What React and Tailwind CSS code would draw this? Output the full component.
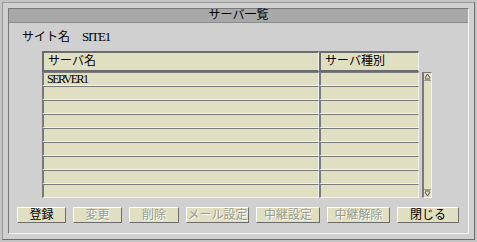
import React from 'react';

const rows = ['SERVER1', '', '', '', '', '', '', '', ''];

const buttons = [
  { label: '登録', w: 'w-[49px]', on: true },
  { label: '変更', w: 'w-[49px]', on: false },
  { label: '削除', w: 'w-[50px]', on: false },
  { label: 'メール設定', w: 'w-[63px]', on: false },
  { label: '中継設定', w: 'w-[64px]', on: false },
  { label: '中継解除', w: 'w-[63px]', on: false },
  { label: '閉じる', w: 'w-[62px]', on: true },
];

const Arrow = ({ down }) => (
  <svg width="7" height="7" viewBox="0 0 7 7" className={down ? 'rotate-180' : ''}>
    <path d="M3.5 1 L1 5 M3.5 1 L6 5 M1 6 L6 6" stroke="#505050" strokeWidth="1" fill="none" />
  </svg>
);

const App = () => {
  return (
    <div
      className="w-[477px] h-[242px] bg-[#c4c4c4] p-[2px] text-black"
      style={{ fontFamily: '"Liberation Serif", "Noto Sans CJK JP", serif' }}
    >
      {/* 外枠 */}
      <div className="h-[238px] border border-t-[#9a9a9a] border-l-[#9a9a9a] border-r-[#6c6c6c] border-b-[#6c6c6c] bg-[#d0d0d0] p-[5px] pb-[4px]">
        {/* パネル */}
        <div className="h-[226px] border border-t-[#7a7a7a] border-l-[#7a7a7a] border-r-[#f4f4f4] border-b-[#f4f4f4] bg-[#d0d0d0] flex flex-col">
          <div className="h-[14px] bg-[#a8a8a8] border-b border-[#8c8c8c] flex items-center justify-center text-[12px] leading-[13px]">
            サーバ一覧
          </div>

          <div className="mt-[7px] ml-[13px] h-[14px] text-[12px] leading-[14px] flex items-baseline gap-[12px]">
            <span>サイト名</span>
            <span className="text-[13px] tracking-[-1.2px]">SITE1</span>
          </div>

          {/* 一覧 */}
          <div className="mt-[7px] ml-[33px] flex items-end gap-[3px]">
            <div className="w-[377px] flex flex-col">
              <div className="grid grid-cols-[277px_100px] h-[21px]">
                <div className="bg-[#e0dfc1] border-t-2 border-l-2 border-[#6c6c6c] border-b-2 border-b-[#6c6c6c] border-r border-r-[#f2f2f2] pl-[4px] text-[12px] leading-[16px]">
                  サーバ名
                </div>
                <div className="bg-[#e0dfc1] border-t-2 border-l-2 border-[#6c6c6c] border-b-2 border-b-[#6c6c6c] border-r border-r-[#f2f2f2] pl-[4px] text-[12px] leading-[16px]">
                  サーバ種別
                </div>
              </div>
              {rows.map((name, i) => (
                <div key={i} className="grid grid-cols-[277px_100px] h-[14px]">
                  <div className="bg-[#e0dfc1] border-t border-l-2 border-[#7a7a7a] border-b border-b-[#f2f2f2] border-r border-r-[#f2f2f2] pl-[3px] text-[12px] leading-[12px] tracking-[-1.5px]">
                    {name}
                  </div>
                  <div className="bg-[#e0dfc1] border-t border-l-2 border-[#7a7a7a] border-b border-b-[#f2f2f2] border-r border-r-[#f2f2f2]" />
                </div>
              ))}
            </div>

            {/* スクロールバー */}
            <div className="w-[10px] h-[126px] border-l-2 border-t border-[#7a7a7a] border-r border-b border-r-[#f2f2f2] border-b-[#f2f2f2] bg-[#e0dfc1] flex flex-col justify-between">
              <div className="h-[8px] border-b border-[#9a9a9a] flex items-center justify-center">
                <Arrow />
              </div>
              <div className="h-[8px] border-t border-[#9a9a9a] flex items-center justify-center">
                <Arrow down />
              </div>
            </div>
          </div>

          {/* ボタン */}
          <div className="mt-[9px] ml-[8px] flex gap-[7px]">
            {buttons.map((b) => (
              <div
                key={b.label}
                className={`${b.w} h-[16px] bg-[#e0dfc1] border border-t-white border-l-white border-r-[#6c6c6c] border-b-[#6c6c6c] flex items-center justify-center text-[12px] leading-[14px] ${
                  b.on ? 'text-black' : 'text-[#9a9a8c] [text-shadow:1px_1px_0_#ffffff]'
                }`}
              >
                {b.label}
              </div>
            ))}
          </div>
        </div>
      </div>
    </div>
  );
};

export default App;
